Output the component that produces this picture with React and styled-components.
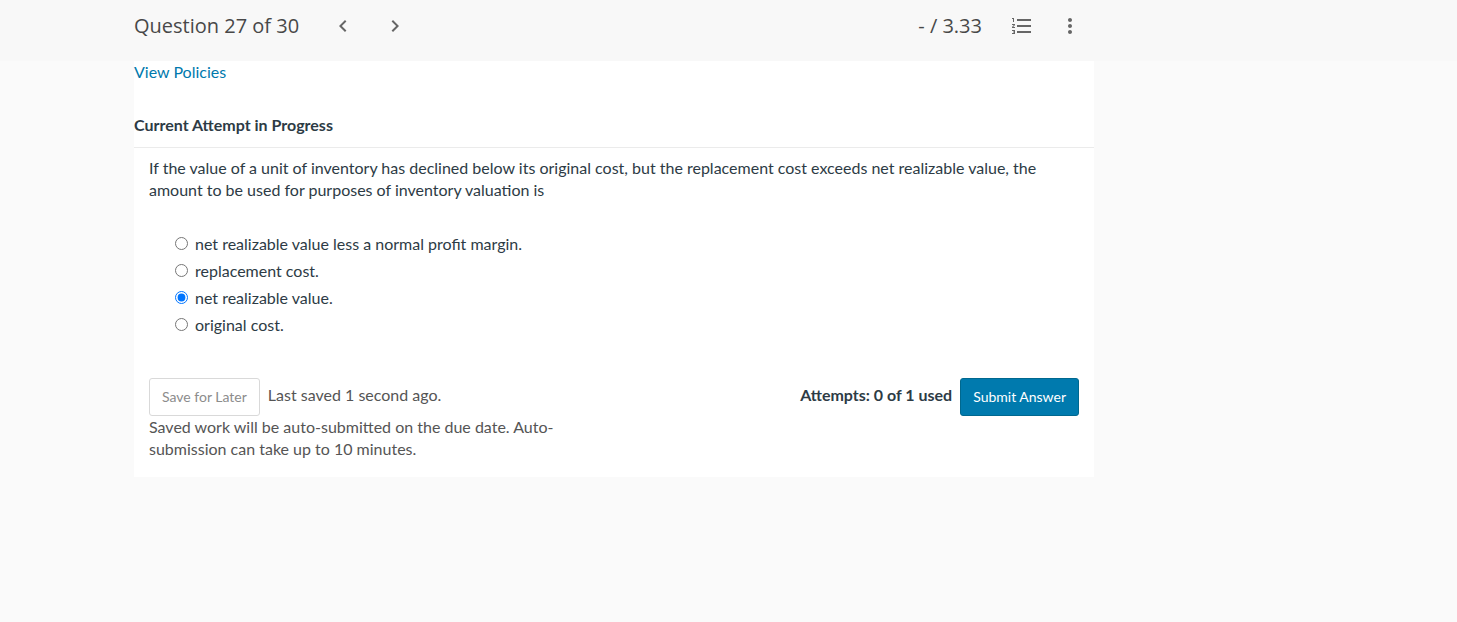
import React, { useState } from "react";
import styled, { createGlobalStyle } from "styled-components";
import {
  MdChevronLeft,
  MdChevronRight,
  MdFormatListNumbered,
  MdMoreVert,
} from "react-icons/md";

const GlobalStyle = createGlobalStyle`
  * {
    box-sizing: border-box;
  }

  body {
    margin: 0;
    background: #fafafa;
    color: #2d3b45;
    font-family: Lato, "Liberation Sans", sans-serif;
    font-size: 16px;
    line-height: 22px;
  }
`;

const Header = styled.header`
  padding: 0 24px 0 134px;
  background: #f8f8f8;
`;

const HeaderContent = styled.div`
  display: flex;
  align-items: center;
  max-width: 960px;
  padding: 6px 4px 15px 0;
  color: #484848;
  font-family: "Open Sans", "Noto Sans", sans-serif;
  font-size: 20px;
`;

const HeaderTitle = styled.h1`
  margin: 0 24px 0 0;
  font-size: 20px;
  font-weight: 400;
`;

const HeaderGroup = styled.div`
  display: flex;
  align-items: center;
  gap: ${(props) => props.$gap};
`;

const Score = styled.div`
  margin-left: auto;
  margin-right: 20px;
`;

const IconButton = styled.button`
  display: flex;
  align-items: center;
  justify-content: center;
  width: 40px;
  height: 40px;
  padding: 0;
  border: 0;
  background: transparent;
  color: #666;
  font-size: 24px;
  cursor: pointer;
`;

const Main = styled.main`
  padding: 0 24px 0 134px;
`;

const Panel = styled.div`
  max-width: 960px;
  background: #fff;
`;

const PoliciesLink = styled.a`
  display: inline-block;
  color: #0079ad;
  text-decoration: none;
`;

const AttemptTitle = styled.h2`
  margin: 0;
  padding: 31px 0 11px;
  border-bottom: 1px solid #ebebeb;
  font-size: 16px;
  font-weight: 700;
`;

const Question = styled.form`
  padding: 9px 15px 17px;
`;

const QuestionText = styled.p`
  margin: 0;
`;

const Options = styled.fieldset`
  display: flex;
  flex-direction: column;
  gap: 5px;
  margin: 32px 0 42px;
  padding: 0 26px;
  border: 0;
`;

const Option = styled.label`
  display: flex;
  align-items: center;
  gap: 7px;

  input {
    width: 13px;
    height: 13px;
    margin: 0 0 2px;
    accent-color: #0075ff;
  }
`;

const Footer = styled.div`
  display: flex;
  align-items: flex-start;
  justify-content: space-between;
`;

const SaveArea = styled.div`
  width: 45%;
  color: #555;
`;

const ActionRow = styled.div`
  display: flex;
  align-items: flex-start;
  gap: 8px;
`;

const ActionText = styled.span`
  padding-top: 6px;
  font-weight: ${(props) => (props.$strong ? 700 : 400)};
`;

const Button = styled.button`
  height: 38px;
  padding: 0 12px;
  border: 1px solid ${(props) => (props.$primary ? "#00688f" : "#d9d9d9")};
  border-radius: 3px;
  background: ${(props) => (props.$primary ? "#007aae" : "#fff")};
  color: ${(props) => (props.$primary ? "#fff" : "#8c8c8c")};
  font-family: inherit;
  font-size: 14px;
  line-height: 20px;
  cursor: pointer;
`;

const SaveNote = styled.p`
  margin: 0;
`;

const options = [
  "net realizable value less a normal profit margin.",
  "replacement cost.",
  "net realizable value.",
  "original cost.",
];

const App = () => {
  const [selected, setSelected] = useState(2);

  return (
    <>
      <GlobalStyle />
      <Header>
        <HeaderContent>
          <HeaderTitle>Question 27 of 30</HeaderTitle>
          <HeaderGroup $gap="12px">
            <IconButton type="button" aria-label="Previous question">
              <MdChevronLeft />
            </IconButton>
            <IconButton type="button" aria-label="Next question">
              <MdChevronRight />
            </IconButton>
          </HeaderGroup>
          <Score>- / 3.33</Score>
          <HeaderGroup $gap="8px">
            <IconButton type="button" aria-label="Question list">
              <MdFormatListNumbered />
            </IconButton>
            <IconButton type="button" aria-label="More options">
              <MdMoreVert />
            </IconButton>
          </HeaderGroup>
        </HeaderContent>
      </Header>
      <Main>
        <Panel>
          <PoliciesLink href="#policies">View Policies</PoliciesLink>
          <AttemptTitle>Current Attempt in Progress</AttemptTitle>
          <Question onSubmit={(e) => e.preventDefault()}>
            <QuestionText id="question-text">
              If the value of a unit of inventory has declined below its
              original cost, but the replacement cost exceeds net realizable
              value, the amount to be used for purposes of inventory valuation
              is
            </QuestionText>
            <Options aria-labelledby="question-text">
              {options.map((option, i) => (
                <Option key={option}>
                  <input
                    type="radio"
                    name="answer"
                    checked={selected === i}
                    onChange={() => setSelected(i)}
                  />
                  {option}
                </Option>
              ))}
            </Options>
            <Footer>
              <SaveArea>
                <ActionRow>
                  <Button type="button">Save for Later</Button>
                  <ActionText>Last saved 1 second ago.</ActionText>
                </ActionRow>
                <SaveNote>
                  Saved work will be auto-submitted on the due date.
                  Auto-submission can take up to 10 minutes.
                </SaveNote>
              </SaveArea>
              <ActionRow>
                <ActionText $strong>Attempts: 0 of 1 used</ActionText>
                <Button type="submit" $primary>
                  Submit Answer
                </Button>
              </ActionRow>
            </Footer>
          </Question>
        </Panel>
      </Main>
    </>
  );
};

export default App;
